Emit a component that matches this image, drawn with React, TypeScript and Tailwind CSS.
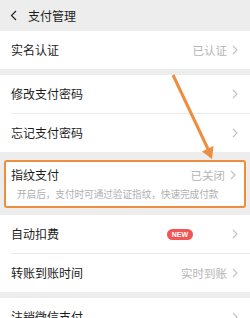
import React from "react";

const Chevron = () => (
  <svg width="6" height="10" viewBox="0 0 6 10" className="ml-[5px] shrink-0">
    <path d="M1 1l4 4-4 4" fill="none" stroke="#c2c2c2" strokeWidth="1.1" />
  </svg>
);

function Row({ title, value, badge, divider }: { title: string; value?: string; badge?: boolean; divider?: boolean }) {
  return (
    <div className="bg-white pl-[11px]">
      <div className={`flex items-center pr-[12px] ${divider ? "h-[39px] border-b border-[#ececec]" : "h-[38px]"}`}>
        <span className="text-[12px] leading-[16px] text-[#1c1c1c] flex-1">{title}</span>
        {badge && (
          <span className="mr-[34px] h-[11px] px-[5px] rounded-full bg-[#f25555] text-white text-[7px] font-bold leading-[11px] font-['Liberation_Sans',sans-serif]">
            NEW
          </span>
        )}
        {value && <span className="text-[11.5px] leading-[16px] text-[#b5b5b5]">{value}</span>}
        <Chevron />
      </div>
    </div>
  );
}

export default function App() {
  return (
    <div className="relative w-[250px] h-[318px] overflow-hidden bg-[#ededed] font-['Noto_Sans_CJK_SC',sans-serif]">
      {/* Header */}
      <div className="h-[31px] flex items-center pl-[10px]">
        <svg width="7" height="11" viewBox="0 0 7 11">
          <path d="M6 1L1.5 5.5 6 10" fill="none" stroke="#222" strokeWidth="1.2" />
        </svg>
        <span className="ml-[11px] text-[12px] text-[#1c1c1c]">支付管理</span>
      </div>

      <Row title="实名认证" value="已认证" />

      <div className="h-[6px]" />
      <Row title="修改支付密码" divider />
      <Row title="忘记支付密码" />

      <div className="h-[8px]" />
      <div className="px-[4px]">
        <div className="h-[48px] bg-white border-[2.5px] border-[#ef8d3e] rounded-[3px] pl-[5px] pr-[8px] flex flex-col justify-center">
          <div className="flex items-center">
            <span className="text-[12px] leading-[16px] text-[#1c1c1c] flex-1">指纹支付</span>
            <span className="text-[11.5px] leading-[16px] text-[#b5b5b5]">已关闭</span>
            <Chevron />
          </div>
          <div className="text-[9.7px] leading-[14px] text-[#b0b0b0] mt-[4px] pl-[6px] tracking-[-0.1px] whitespace-nowrap">
            开启后，支付时可通过验证指纹，快速完成付款
          </div>
        </div>
      </div>

      <div className="h-[7px]" />
      <Row title="自动扣费" badge divider />
      <Row title="转账到账时间" value="实时到账" />

      <div className="h-[6px]" />
      <Row title="注销微信支付" />

      {/* annotation arrow */}
      <svg className="absolute left-0 top-0 pointer-events-none" width="250" height="318">
        <line x1="173" y1="75" x2="208" y2="149" stroke="#ef8d3e" strokeWidth="3" />
        <polygon points="213.5,146 202,151.5 212,159" fill="#ef8d3e" />
      </svg>
    </div>
  );
}
